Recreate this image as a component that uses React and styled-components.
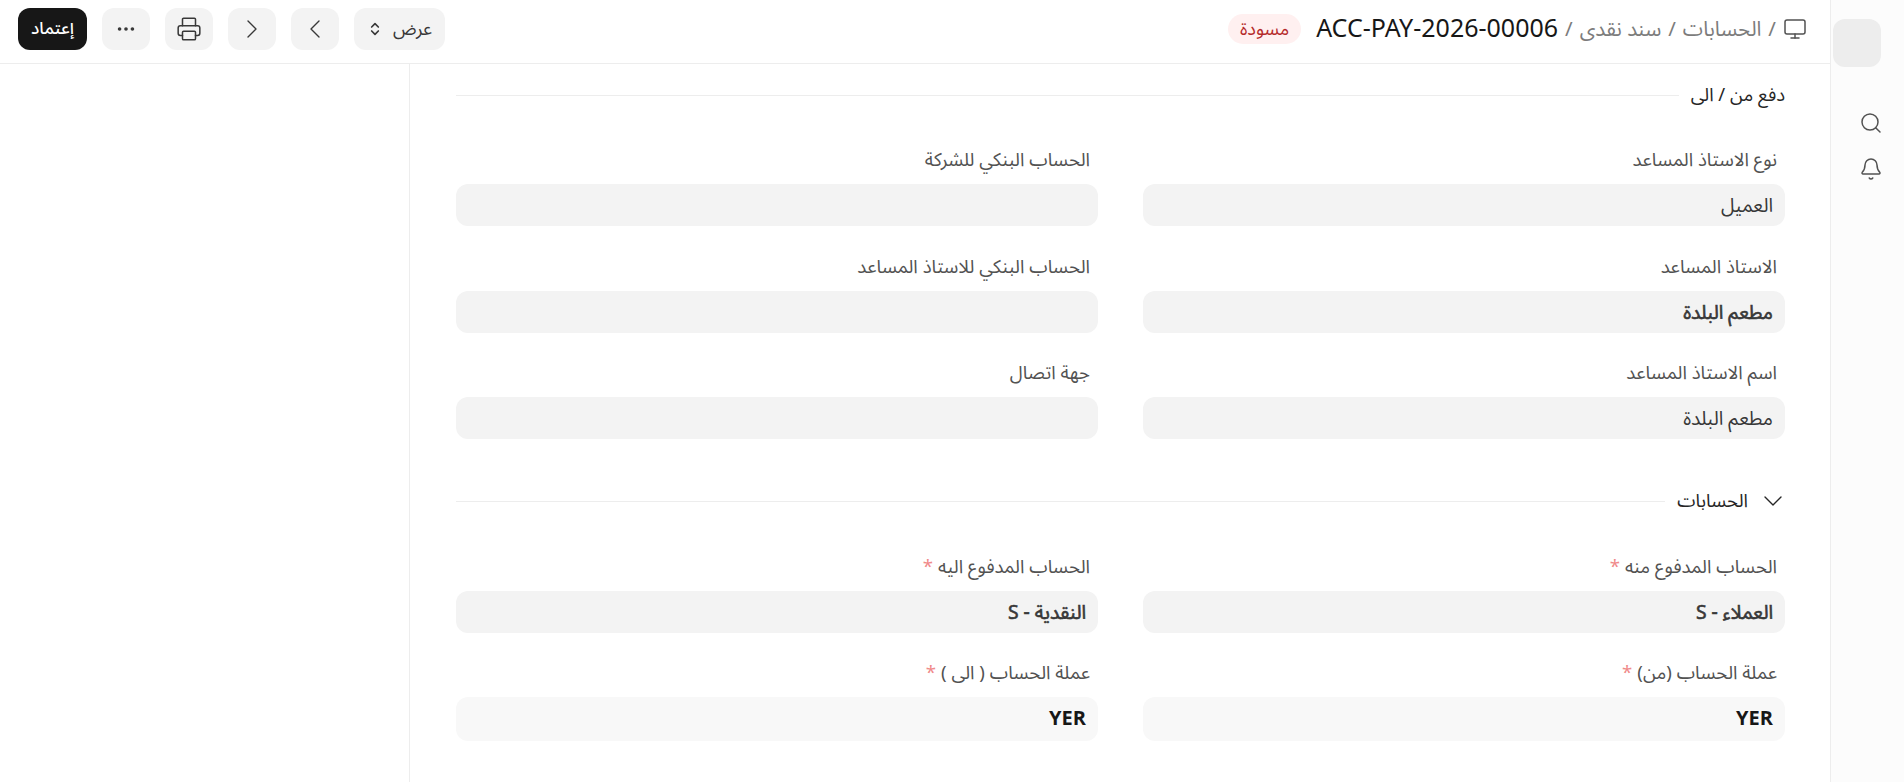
import React from 'react';
import styled, { createGlobalStyle } from 'styled-components';
import { Bell, ChevronDown, ChevronLeft, ChevronRight, ChevronsUpDown, Ellipsis, Monitor, Printer, Search } from 'lucide-react';

const GlobalStyle = createGlobalStyle`
    html, body {
        margin: 0;
        height: 100%;
        background: #fff;
        overflow: hidden;
    }
    * {
        box-sizing: border-box;
    }
`;

const Page = styled.div`
    display: flex;
    direction: rtl;
    height: 782px;
    font-family: "Noto Sans Arabic", "Noto Sans", "DejaVu Sans", sans-serif;
    color: #383838;
`;

const Sidebar = styled.aside`
    display: flex;
    flex-direction: column;
    align-items: flex-start;
    flex: 0 0 74px;
    padding: 19px 21px 0 0;
    background: #fcfcfc;
    border-left: 1px solid #ededed;
`;

const SideLogo = styled.div`
    width: 48px;
    height: 48px;
    flex: none;
    margin: 0 2px 44px -25px;
    border-radius: 12px;
    background: #ededed;
`;

const SideIcon = styled.div`
    display: flex;
    height: 24px;
    margin-bottom: 22px;
    color: #525252;
`;

const Main = styled.div`
    flex: 1;
    display: flex;
    flex-direction: column;
    min-width: 0;
`;

const Header = styled.header`
    display: flex;
    align-items: flex-start;
    justify-content: space-between;
    flex: 0 0 64px;
    padding: 8px 23px 0 18px;
    border-bottom: 1px solid #ededed;
`;

const Crumbs = styled.div`
    display: flex;
    align-items: center;
    gap: 7px;
    height: 42px;
    font-size: 20.5px;
    color: #7c7c7c;
`;

const Title = styled.span`
    font-size: 25px;
    color: #171717;
    direction: ltr;
`;

const Badge = styled.span`
    display: flex;
    align-items: center;
    height: 30px;
    padding: 0 12px;
    margin-right: 8px;
    border-radius: 15px;
    background: #fff0f0;
    color: #b52a2a;
    font-size: 18px;
`;

const Actions = styled.div`
    display: flex;
    gap: 15px;
`;

const ToolButton = styled.button`
    display: flex;
    align-items: center;
    justify-content: center;
    gap: 10px;
    width: ${(p) => p.$width || 48}px;
    height: 42px;
    padding: 0;
    border: 0;
    border-radius: 12px;
    background: #f3f3f3;
    color: #383838;
    font: inherit;
    font-size: 18px;
`;

const SubmitButton = styled(ToolButton)`
    background: #171717;
    color: #fff;
    font-size: 17px;
    font-weight: 500;
`;

const Body = styled.div`
    flex: 1;
    display: flex;
    min-height: 0;
`;

const FormColumn = styled.main`
    flex: 0 0 1420px;
    padding: 17px 45px 0 46px;
    border-left: 1px solid #ededed;
`;

const SectionHead = styled.div`
    display: flex;
    align-items: center;
    gap: 12px;
    height: 28px;
    font-size: 18.5px;
    color: #262626;
`;

const SectionChevron = styled(ChevronDown)`
    margin: 0 -4px 0 -3px;
`;

const Rule = styled.div`
    flex: 1;
    height: 1px;
    background: #ededed;
`;

const FieldGrid = styled.div`
    display: grid;
    grid-template-columns: 642px 642px;
    grid-template-rows: ${(p) => p.$rows || 'auto'};
    column-gap: 45px;
    row-gap: 29px;
    margin: ${(p) => p.$top}px 0 ${(p) => p.$bottom}px;
`;

const Field = styled.div`
    display: flex;
    flex-direction: column;
`;

const Label = styled.label`
    height: 20px;
    margin-bottom: 15px;
    padding-right: 8px;
    font-size: 18.6px;
    line-height: 22px;
    color: #525252;
`;

const Required = styled.span`
    color: #f08a8a;
    margin-right: 5px;
`;

const Input = styled.div`
    display: flex;
    align-items: center;
    height: ${(p) => (p.$light ? 44 : 42)}px;
    padding: 0 12px;
    border-radius: 12px;
    background: ${(p) => (p.$light ? '#f8f8f8' : '#f3f3f3')};
    font-size: ${(p) => (p.$light ? 20 : 19.3)}px;
    font-weight: ${(p) => (p.$light ? 700 : 400)};
    -webkit-text-stroke: ${(p) => (p.$bold ? '0.6px' : '0')};
    color: ${(p) => (p.$light ? '#171717' : '#383838')};
`;

const partyFields = [
    { label: 'نوع الاستاذ المساعد', value: 'العميل' },
    { label: 'الحساب البنكي للشركة' },
    { label: 'الاستاذ المساعد', value: 'مطعم البلدة', bold: true },
    { label: 'الحساب البنكي للاستاذ المساعد' },
    { label: 'اسم الاستاذ المساعد', value: 'مطعم البلدة' },
    { label: 'جهة اتصال' },
];

const accountFields = [
    { label: 'الحساب المدفوع منه', value: 'العملاء - S', bold: true, required: true },
    { label: 'الحساب المدفوع اليه', value: 'النقدية - S', bold: true, required: true },
    { label: 'عملة الحساب (من)', value: 'YER', required: true, light: true },
    { label: 'عملة الحساب ( الى )', value: 'YER', required: true, light: true },
];

const renderFields = (fields) =>
    fields.map((f) => (
        <Field key={f.label}>
            <Label>
                {f.label}
                {f.required && <Required>*</Required>}
            </Label>
            <Input $bold={f.bold} $light={f.light}>{f.value}</Input>
        </Field>
    ));

const App = () => (
    <>
        <GlobalStyle />
        <Page>
            <Sidebar>
                <SideLogo />
                <SideIcon><Search size={24} strokeWidth={1.5} /></SideIcon>
                <SideIcon><Bell size={24} strokeWidth={1.5} /></SideIcon>
            </Sidebar>
            <Main>
                <Header>
                    <Crumbs>
                        <Monitor size={24} strokeWidth={1.5} color="#525252" />
                        <span>/</span>
                        <span>الحسابات</span>
                        <span>/</span>
                        <span>سند نقدى</span>
                        <span>/</span>
                        <Title>ACC-PAY-2026-00006</Title>
                        <Badge>مسودة</Badge>
                    </Crumbs>
                    <Actions>
                        <ToolButton $width={91}>
                            عرض
                            <ChevronsUpDown size={16} strokeWidth={2.5} />
                        </ToolButton>
                        <ToolButton><ChevronLeft size={32} strokeWidth={1} /></ToolButton>
                        <ToolButton><ChevronRight size={32} strokeWidth={1} /></ToolButton>
                        <ToolButton><Printer size={26} strokeWidth={1.4} /></ToolButton>
                        <ToolButton><Ellipsis size={22} strokeWidth={2} /></ToolButton>
                        <SubmitButton $width={69}>إعتماد</SubmitButton>
                    </Actions>
                </Header>
                <Body>
                    <FormColumn>
                        <SectionHead>
                            <span>دفع من / الى</span>
                            <Rule />
                        </SectionHead>
                        <FieldGrid $top={40} $bottom={48} $rows="78px 77px 77px">{renderFields(partyFields)}</FieldGrid>
                        <SectionHead>
                            <SectionChevron size={32} strokeWidth={1} />
                            <span>الحسابات</span>
                            <Rule />
                        </SectionHead>
                        <FieldGrid $top={41} $bottom={0}>{renderFields(accountFields)}</FieldGrid>
                    </FormColumn>
                </Body>
            </Main>
        </Page>
    </>
);

export default App;
